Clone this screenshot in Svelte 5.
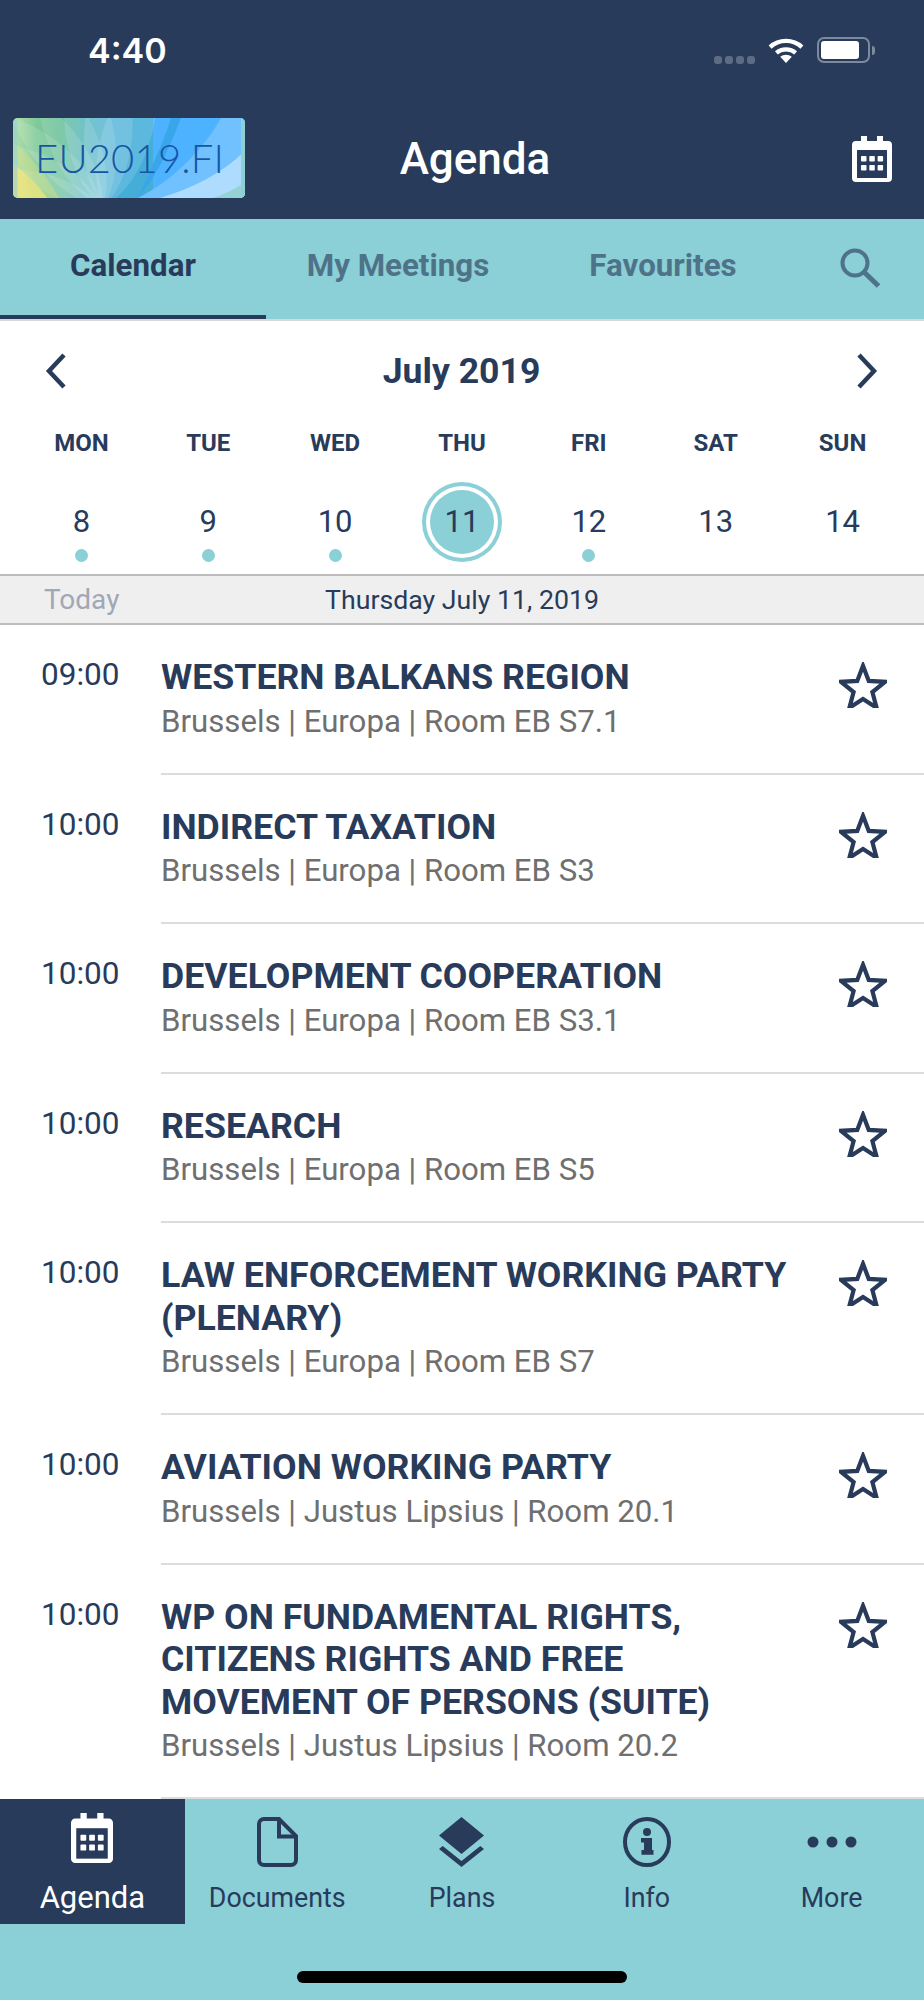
<script>
  const days = [
    { name: 'MON', num: 8, dot: true },
    { name: 'TUE', num: 9, dot: true },
    { name: 'WED', num: 10, dot: true },
    { name: 'THU', num: 11, active: true },
    { name: 'FRI', num: 12, dot: true },
    { name: 'SAT', num: 13 },
    { name: 'SUN', num: 14 }
  ];

  const meetings = [
    { time: '09:00', title: 'WESTERN BALKANS REGION', place: 'Brussels | Europa | Room EB S7.1' },
    { time: '10:00', title: 'INDIRECT TAXATION', place: 'Brussels | Europa | Room EB S3' },
    { time: '10:00', title: 'DEVELOPMENT COOPERATION', place: 'Brussels | Europa | Room EB S3.1' },
    { time: '10:00', title: 'RESEARCH', place: 'Brussels | Europa | Room EB S5' },
    { time: '10:00', title: 'LAW ENFORCEMENT WORKING PARTY (PLENARY)', place: 'Brussels | Europa | Room EB S7' },
    { time: '10:00', title: 'AVIATION WORKING PARTY', place: 'Brussels | Justus Lipsius | Room 20.1' },
    { time: '10:00', title: 'WP ON FUNDAMENTAL RIGHTS, CITIZENS RIGHTS AND FREE MOVEMENT OF PERSONS (SUITE)', place: 'Brussels | Justus Lipsius | Room 20.2' }
  ];

  // fan of leaves in the logo, angles in degrees around the point under its bottom edge
  const petals = [-80, -66, -52, -38, -24, -10, 4, 18];
</script>

{#snippet calendarIcon(color, hole, w, h)}
  <svg width={w} height={h} viewBox="0 0 40 46" preserveAspectRatio="none">
    <path fill={color} d="M9 0h6v5h10V0h6v5h5a4 4 0 0 1 4 4v33a4 4 0 0 1-4 4H4a4 4 0 0 1-4-4V9a4 4 0 0 1 4-4h5z" />
    <rect x="5" y="14" width="30" height="28" fill={hole} />
    {#each [9, 17.3, 25.6] as x}
      {#each [20, 29] as y}
        <rect x={x} y={y} width="5.5" height="5.5" rx="0.8" fill={color} />
      {/each}
    {/each}
  </svg>
{/snippet}

<div class="page">
  <header class="top">
    <div class="status">
      <span class="clock">4:40</span>
      <div class="status-icons">
        <span class="signal"><i></i><i></i><i></i><i></i></span>
        <svg width="36" height="26" viewBox="0 0 37 27">
          <path fill="none" stroke="#fff" stroke-width="4.4" d="M2 10.5C11 2 26 2 35 10.5" />
          <path fill="none" stroke="#fff" stroke-width="4.4" d="M8.5 16.5c5.5-4.8 14.5-4.8 20 0" />
          <path fill="#fff" d="M12.5 20.5c3.4-2.8 8.6-2.8 12 0l-6 6.5z" />
        </svg>
        <span class="battery"><b></b></span>
        <span class="nub"></span>
      </div>
    </div>
    <div class="titlebar">
      <div class="logo">
        <svg class="logo-art" viewBox="0 0 232 80">
          <defs>
            <linearGradient id="sky" x1="0" x2="1" y1="0" y2="0">
              <stop offset="0" stop-color="#a9dc9c" />
              <stop offset="0.14" stop-color="#6cc28a" />
              <stop offset="0.27" stop-color="#58b98c" />
              <stop offset="0.42" stop-color="#46b0b8" />
              <stop offset="0.6" stop-color="#45aed8" />
            </linearGradient>
          </defs>
          <rect width="170" height="80" fill="url(#sky)" />
          <rect x="140" width="92" height="80" fill="#4db2ff" />
          {#each petals as a}
            <path d="M0 0C-34 -40 -30 -110 0 -170C30 -110 34 -40 0 0z" fill="#fff" opacity="0.13" transform="translate(90 90) rotate({a})" />
          {/each}
          <path d="M0 80V46C12 54 26 68 34 80z" fill="#f2e67c" opacity="0.8" />
          <path d="M0 24C14 34 34 58 46 80H20C14 62 8 46 0 36z" fill="#d9e27f" opacity="0.4" />
          <path d="M158 0h10C152 42 140 62 125 80C138 50 150 26 158 0z" fill="#3aa6ea" />
          <path d="M208 0C190 32 160 62 125 80H232V0z" fill="#72c1ff" />
          <path d="M147 80C180 70 208 56 232 33V80z" fill="#aedcff" />
          <path d="M200 80C212 76 222 71 232 64V80z" fill="#93d3d4" />
          <rect x="0" width="4.5" height="80" fill="#8fd0d5" opacity="0.55" />
          <rect x="228" width="4" height="80" fill="#8fd0d5" />
        </svg>
        <span class="logo-text">EU2019.FI</span>
      </div>
      <h1>Agenda</h1>
      <span class="head-cal">{@render calendarIcon('#fff', '#283b5a', 40, 46)}</span>
    </div>
  </header>

  <nav class="tabs">
    <span class="tab on">Calendar</span>
    <span class="tab meet">My Meetings</span>
    <span class="tab fav">Favourites</span>
    <svg class="search" width="40" height="40" viewBox="0 0 40 40">
      <circle cx="15" cy="15" r="12.5" fill="none" stroke="#4e7389" stroke-width="4" />
      <path d="M24 24l14.5 14" stroke="#4e7389" stroke-width="5" />
    </svg>
  </nav>

  <section class="cal">
    <div class="month">
      <svg width="24" height="36" viewBox="0 0 24 36"><path d="M20 2L5 18l15 16" fill="none" stroke="#283b5a" stroke-width="4.5" /></svg>
      <span>July 2019</span>
      <svg width="24" height="36" viewBox="0 0 24 36"><path d="M4 2l15 16L4 34" fill="none" stroke="#283b5a" stroke-width="4.5" /></svg>
    </div>
    <div class="week">
      {#each days as d}
        <div class="day">
          <span class="dname">{d.name}</span>
          <span class="dnum" class:active={d.active}>{d.num}</span>
          <span class="dot" class:show={d.dot}></span>
        </div>
      {/each}
    </div>
  </section>

  <div class="strip">
    <span class="today">Today</span>
    <span class="fulldate">Thursday July 11, 2019</span>
  </div>

  <ul class="list">
    {#each meetings as m}
      <li class="row">
        <span class="time">{m.time}</span>
        <div class="info">
          <div class="txt">
            <div class="title">{m.title}</div>
            <div class="place">{m.place}</div>
          </div>
          <svg class="star" width="48" height="46" viewBox="0 0 50 48">
            <path d="M25 4l6 15.8 17 .9-13.2 10.700 4.400 16.400L25 38.600 10.800 47.800l4.400-16.400L2 20.700l17-.9z" fill="none" stroke="#283b5a" stroke-width="4.4" />
          </svg>
        </div>
      </li>
    {/each}
  </ul>

  <footer class="bar">
    <div class="bar-items">
      <div class="item on">
        {@render calendarIcon('#fff', '#283b5a', 42, 50)}
        <span>Agenda</span>
      </div>
      <div class="item">
        <svg width="41" height="50" viewBox="0 0 41 50">
          <path d="M7 2h15L39 19v24a5 5 0 0 1-5 5H7a5 5 0 0 1-5-5V7a5 5 0 0 1 5-5z" fill="none" stroke="#283b5a" stroke-width="4" />
          <path d="M22 3v16.500h16" fill="none" stroke="#283b5a" stroke-width="4" />
        </svg>
        <span>Documents</span>
      </div>
      <div class="item">
        <svg width="45" height="50" viewBox="0 0 45 50">
          <path d="M22.500 0L45 18.500 22.500 37 0 18.500z" fill="#283b5a" />
          <path d="M3.700 29L22.500 44 41.300 29 45 32 22.500 50 0 32z" fill="#283b5a" />
        </svg>
        <span>Plans</span>
      </div>
      <div class="item">
        <svg width="48" height="50" viewBox="0 0 48 50">
          <ellipse cx="24" cy="25" rx="22" ry="23" fill="none" stroke="#283b5a" stroke-width="4" />
          <circle cx="24" cy="15" r="4" fill="#283b5a" />
          <path d="M18 21h11v12h1.500v4.700H18.500V33H21v-7.500h-3z" fill="#283b5a" />
        </svg>
        <span>Info</span>
      </div>
      <div class="item">
        <svg width="50" height="50" viewBox="0 0 50 50">
          <circle cx="6" cy="25" r="5.500" fill="#283b5a" />
          <circle cx="25" cy="25" r="5.500" fill="#283b5a" />
          <circle cx="44" cy="25" r="5.500" fill="#283b5a" />
        </svg>
        <span>More</span>
      </div>
    </div>
    <div class="home"></div>
  </footer>
</div>

<style>
  :global(body) {
    margin: 0;
    background: #fff;
  }
  .page {
    width: 924px;
    height: 2000px;
    overflow: hidden;
    display: flex;
    flex-direction: column;
    font-family: Roboto, sans-serif;
    color: #283b5a;
  }
  .top {
    background: #283b5a;
    height: 219px;
    flex: none;
    color: #fff;
  }
  .status {
    height: 100px;
    display: flex;
    align-items: center;
    justify-content: space-between;
    padding: 0 49px 0 88px;
  }
  .clock {
    font-family: Inter, sans-serif;
    font-size: 34px;
    font-weight: 600;
  }
  .status-icons {
    display: flex;
    align-items: center;
  }
  .signal {
    display: flex;
    gap: 3px;
    margin: 19px 13px 0 0;
  }
  .signal i {
    width: 8px;
    height: 8px;
    border-radius: 3px;
    background: #5d6c84;
  }
  .battery {
    width: 53px;
    height: 26px;
    margin-left: 13px;
    padding: 2px;
    box-sizing: border-box;
    border: 2px solid #7d8a9e;
    border-radius: 7px;
    display: block;
  }
  .battery b {
    display: block;
    width: 38px;
    height: 18px;
    background: #fff;
    border-radius: 3px;
  }
  .nub {
    width: 3px;
    height: 9px;
    margin-left: 2px;
    background: #7d8a9e;
    border-radius: 0 3px 3px 0;
  }
  .titlebar {
    height: 119px;
    display: flex;
    align-items: flex-start;
    justify-content: space-between;
    padding: 18px 32px 0 13px;
    position: relative;
  }
  .logo {
    width: 232px;
    height: 80px;
    border-radius: 5px;
    overflow: hidden;
    position: relative;
    background: #8fd0d5;
  }
  .logo-art {
    width: 232px;
    height: 80px;
    display: block;
  }
  .logo-text {
    position: absolute;
    left: 22px;
    top: 16px;
    font-family: Lato, sans-serif;
    font-weight: 300;
    font-size: 40px;
    line-height: 48px;
    letter-spacing: 0.2px;
    color: #1556a4;
  }
  h1 {
    margin: 16px 0 0;
    position: absolute;
    left: 26px;
    right: 0;
    text-align: center;
    font-size: 44px;
    line-height: 50px;
    font-weight: 500;
  }
  .head-cal {
    margin-top: 18px;
    display: block;
  }
  .tabs {
    height: 102px;
    flex: none;
    background: #8bcfd7;
    display: flex;
    position: relative;
    box-sizing: border-box;
    border-bottom: 2px solid #d5d9da;
    font-size: 31.3px;
    font-weight: 700;
    color: #4e7389;
  }
  .tab {
    display: flex;
    align-items: center;
    justify-content: center;
    box-sizing: border-box;
    height: 100px;
    padding-bottom: 7px;
  }
  .tab.on {
    width: 266px;
    color: #283b5a;
    border-bottom: 4px solid #283b5a;
    padding-bottom: 3px;
  }
  .tab.meet {
    width: 264px;
  }
  .tab.fav {
    width: 266px;
  }
  .search {
    margin: 29px 0 0 44px;
  }
  .cal {
    height: 253px;
    flex: none;
  }
  .month {
    display: flex;
    justify-content: space-between;
    align-items: center;
    padding: 0 45px 0 44px;
    height: 100px;
    font-size: 35.6px;
    font-weight: 700;
  }
  .week {
    display: grid;
    grid-template-columns: repeat(7, 1fr);
    padding: 0 18px;
    margin-top: 8px;
  }
  .day {
    display: flex;
    flex-direction: column;
    align-items: center;
  }
  .dname {
    font-size: 24px;
    line-height: 28px;
    font-weight: 700;
    height: 28px;
    margin-bottom: 31px;
  }
  .dnum {
    width: 68px;
    height: 68px;
    line-height: 68px;
    text-align: center;
    border-radius: 50%;
    font-size: 31px;
    box-sizing: border-box;
  }
  .dnum.active {
    background: #8bcfd7;
    box-shadow: 0 0 0 4px #fff, 0 0 0 8px #8bcfd7;
    width: 64px;
    height: 64px;
    line-height: 64px;
    margin-top: 2px;
    margin-bottom: 2px;
  }
  .dot {
    width: 13px;
    height: 13px;
    border-radius: 50%;
    margin-top: -7px;
  }
  .dot.show {
    background: #8bcfd7;
  }
  .strip {
    height: 51px;
    flex: none;
    box-sizing: border-box;
    background: #efefef;
    border-top: 2px solid #bcbcbc;
    border-bottom: 2px solid #bcbcbc;
    display: flex;
    align-items: center;
    justify-content: center;
    position: relative;
    font-size: 26.7px;
  }
  .today {
    position: absolute;
    left: 44px;
    font-size: 28px;
    color: #a0a7b5;
  }
  .list {
    list-style: none;
    margin: 0;
    padding: 0;
    flex: 1;
  }
  .row {
    display: flex;
  }
  .time {
    width: 161px;
    padding: 32px 0 0 41px;
    box-sizing: border-box;
    font-size: 31.5px;
    line-height: 36px;
    flex: none;
  }
  .info {
    flex: 1;
    display: flex;
    justify-content: space-between;
    padding: 31px 37px 0 0;
    border-bottom: 2px solid #dcdcdc;
    box-sizing: border-box;
  }
  .txt {
    width: 640px;
    padding-bottom: 29px;
  }
  .title {
    font-size: 35.7px;
    line-height: 42.5px;
    font-weight: 700;
  }
  .place {
    font-size: 31.2px;
    line-height: 44px;
    margin-top: 1px;
    color: #6f6f6f;
  }
  .star {
    margin-top: 6px;
    flex: none;
  }
  .bar {
    height: 201px;
    flex: none;
    background: #8bcfd7;
    position: relative;
  }
  .bar-items {
    display: grid;
    grid-template-columns: repeat(5, 1fr);
    height: 125px;
  }
  .item {
    display: flex;
    flex-direction: column;
    align-items: center;
    justify-content: flex-end;
    gap: 16px;
    font-size: 26.8px;
    line-height: 30px;
    padding-bottom: 11px;
    box-sizing: border-box;
  }
  .item.on {
    background: #283b5a;
    color: #fff;
    font-size: 31px;
    gap: 20px;
  }
  .home {
    position: absolute;
    left: 297px;
    top: 172px;
    width: 330px;
    height: 12px;
    background: #000;
    border-radius: 6px;
  }
</style>
